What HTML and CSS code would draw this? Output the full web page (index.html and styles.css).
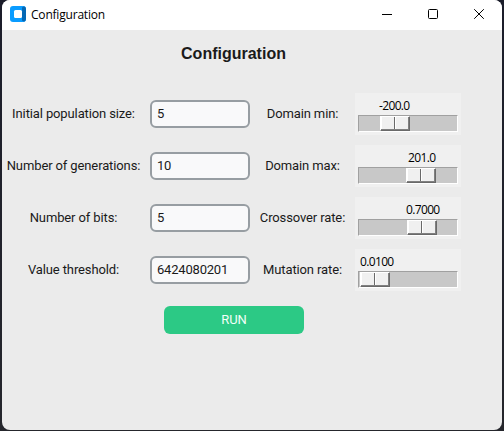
FILE: index.html
```
<!DOCTYPE html>
<html lang="en">
<head>
<meta charset="utf-8">
<title>Configuration</title>
<link rel="stylesheet" href="styles.css">
</head>
<body>
<div class="window">
  <header class="titlebar">
    <svg class="app-icon" width="16" height="16" viewBox="0 0 16 16">
      <rect width="16" height="16" rx="3" fill="#0a9cff"/>
      <path d="M12 1.5 14 .3Q16 1 16 3v10q0 2-2 2.8L12 14.5z" fill="#0668b4"/>
      <rect x="4" y="4" width="8" height="8" rx="1.5" fill="#fff"/>
    </svg>
    <span class="caption">Configuration</span>
    <div class="controls">
      <svg width="46" height="30" viewBox="0 0 46 30"><path d="M18 14.5h10" stroke="#000"/></svg>
      <svg width="46" height="30" viewBox="0 0 46 30"><rect x="18.5" y="9.5" width="9" height="9" rx="1" fill="none" stroke="#000"/></svg>
      <svg width="46" height="30" viewBox="0 0 46 30"><path d="M18.2 9.2l9.6 9.6M27.8 9.2l-9.6 9.6" stroke="#000" fill="none"/></svg>
    </div>
  </header>
  <main class="content">
    <h1 class="heading">Configuration</h1>
    <div class="form">
      <label class="label">Initial population size:</label>
      <input class="entry" value="5">
      <label class="label">Domain min:</label>
      <div class="scale"><span class="value" style="margin-left:24px">-200.0</span><div class="trough"><div class="slider" style="margin-left:21px"></div></div></div>

      <label class="label">Number of generations:</label>
      <input class="entry" value="10">
      <label class="label">Domain max:</label>
      <div class="scale"><span class="value" style="margin-left:53px">201.0</span><div class="trough"><div class="slider" style="margin-left:47px"></div></div></div>

      <label class="label">Number of bits:</label>
      <input class="entry" value="5">
      <label class="label">Crossover rate:</label>
      <div class="scale"><span class="value" style="margin-left:51px">0.7000</span><div class="trough"><div class="slider" style="margin-left:48px"></div></div></div>

      <label class="label">Value threshold:</label>
      <input class="entry" value="6424080201">
      <label class="label">Mutation rate:</label>
      <div class="scale"><span class="value" style="margin-left:5px">0.0100</span><div class="trough"><div class="slider" style="margin-left:1px"></div></div></div>
    </div>
    <button class="run">RUN</button>
  </main>
</div>
</body>
</html>
```

FILE: styles.css
```
* { box-sizing: border-box; }
body {
  margin: 0;
  height: 431px;
  padding: 0 2px 1px;
  overflow: hidden;
  background: linear-gradient(#1b1d2a, #25262c);
  font-family: Roboto, sans-serif;
}
.window {
  height: 430px;
  background: #ebebeb;
  border-radius: 8px;
  overflow: hidden;
}
.titlebar {
  display: flex;
  align-items: center;
  height: 30px;
  padding-left: 8px;
  background: #fff;
}
.app-icon { margin-top: -2px; }
.caption {
  margin-left: 5px;
  font: 12px/28px "Open Sans", sans-serif;
  letter-spacing: -0.2px;
  color: #000;
}
.controls { display: flex; margin-left: auto; }
.heading {
  width: 463px;
  margin: 0;
  padding-top: 9px;
  height: 58px;
  font: bold 16px/30px "Liberation Sans", sans-serif;
  color: #1a1a1a;
  text-align: center;
}
.form {
  display: grid;
  grid-template-columns: 143px 108px 99px 106px;
  grid-auto-rows: 52px;
  align-items: center;
}
.label {
  font-size: 13px;
  line-height: 28px;
  letter-spacing: -0.12px;
  color: #1a1a1a;
  text-align: center;
  white-space: nowrap;
}
.entry {
  width: 100px;
  height: 28px;
  margin-left: 5px;
  padding: 0 5px 2px;
  border: 2px solid #979da2;
  border-radius: 6px;
  background: #f9f9fa;
  font: 13px Roboto, sans-serif;
  letter-spacing: -0.2px;
  color: #1a1a1a;
}
.scale {
  width: 106px;
  height: 42px;
  margin-left: 3px;
  padding: 3px;
  background: #f0f0f0;
}
.value {
  display: block;
  height: 19px;
  margin-right: -10px;
  text-indent: -3px;
  font: 12px/19px "Open Sans", sans-serif;
  letter-spacing: -0.65px;
  color: #000;
}
.trough {
  width: 100px;
  height: 17px;
  border: 1px solid;
  border-color: #a0a0a0 #fff #fff #a0a0a0;
  background: #c8c8c8;
}
.slider {
  width: 30px;
  height: 15px;
  border: 1px solid;
  border-color: #fff #696969 #696969 #fff;
  background: linear-gradient(90deg, transparent 13px, #696969 13px, #696969 14px, #fff 14px, #fff 15px, transparent 15px), #f0f0f0;
  box-shadow: inset -1px -1px #808080, inset 1px 0 #fff;
}
.run {
  display: block;
  width: 140px;
  height: 28px;
  margin: 10px 0 0 162px;
  padding: 0 0 2px;
  border: 0;
  border-radius: 6px;
  background: #2cc985;
  font: 13px Roboto, sans-serif;
  letter-spacing: -0.15px;
  color: #f2fff8;
}
```
